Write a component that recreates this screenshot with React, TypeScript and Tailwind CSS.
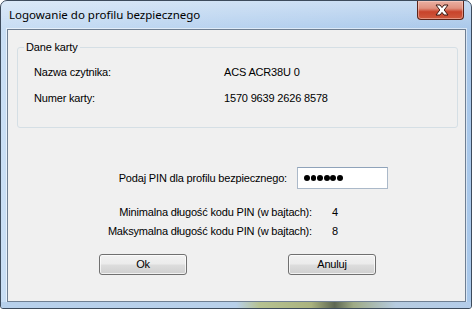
export default function App() {
  const base = { fontFamily: '"Liberation Sans", Arial, sans-serif' };
  return (
    <div className="w-[472px] h-[309px] bg-white">
      <div
        className="w-[472px] h-[309px] rounded-t-[7px] rounded-b-[3px] border border-[#3d4b5c] bg-[linear-gradient(to_right,#c9def4_0%,#bcd5f0_35%,#b3cfee_65%,#a9c8ea_100%)] flex flex-col overflow-hidden"
        style={base}
      >
        {/* title bar */}
        <div className="h-[28px] flex items-start shrink-0 bg-[linear-gradient(to_bottom,rgba(255,255,255,0.35),rgba(255,255,255,0))]">
          <div
            className="pl-[8px] pt-[6px] text-[11.5px] leading-[16px] text-black"
            style={{ fontFamily: '"Noto Sans", "Open Sans", sans-serif' }}
          >
            Logowanie do profilu bezpiecznego
          </div>
          <div className="ml-auto mr-[7px] w-[47px] h-[19px] rounded-b-[4px] border border-t-0 border-[#5c2419] bg-[linear-gradient(to_bottom,#eab0a2_0%,#e0917f_40%,#c8432b_60%,#cf5a3e_100%)] shadow-[inset_0_0_0_1px_rgba(255,220,210,0.45)] flex items-center justify-center">
            <svg width="14" height="12" viewBox="0 0 14 12" className="ml-[2px]">
              <polygon
                points="1,1 5,1 7,3.6 9,1 13,1 9.2,6 13,11 9,11 7,8.4 5,11 1,11 4.8,6"
                fill="#ffffff"
                stroke="#3b1710"
                strokeWidth="1"
                strokeLinejoin="round"
              />
            </svg>
          </div>
        </div>

        {/* client area */}
        <div className="ml-[6px] mr-[5px] h-[273px] shrink-0 border border-[#6f7f92] bg-[#f0f0f0] shadow-[0_0_0_1px_rgba(255,255,255,0.55)] flex flex-col text-[11px] leading-[13px] tracking-[-0.17px] text-black">
          {/* group box */}
          <div className="relative mt-[17px] ml-[9px] w-[441px] h-[81px] rounded-[3px] border border-[#d5dfe5] pl-[16px] pt-[18px] flex flex-col gap-[13px]">
            <span className="absolute left-[6px] top-[-7px] px-[2px] bg-[#f0f0f0]">Dane karty</span>
            <div className="flex">
              <span className="w-[190px]">Nazwa czytnika:</span>
              <span>ACS ACR38U 0</span>
            </div>
            <div className="flex">
              <span className="w-[190px]">Numer karty:</span>
              <span>1570 9639 2626 8578</span>
            </div>
          </div>

          {/* PIN row */}
          <div className="mt-[39px] flex items-center h-[22px]">
            <span className="w-[279px] text-right">Podaj PIN dla profilu bezpiecznego:</span>
            <div className="ml-[10px] w-[91px] h-[22px] bg-white border border-[#abb9c9] border-t-[#8fa3ba] flex items-center pl-[6px] gap-[0.8px]">
              {[0, 1, 2, 3, 4, 5].map((i) => (
                <span key={i} className="w-[5.8px] h-[5.8px] rounded-full bg-black" />
              ))}
            </div>
          </div>

          {/* min/max */}
          <div className="mt-[17px] flex">
            <span className="w-[304px] text-right">Minimalna długość kodu PIN (w bajtach):</span>
            <span className="ml-[20px]">4</span>
          </div>
          <div className="mt-[6px] flex">
            <span className="w-[304px] text-right">Maksymalna długość kodu PIN (w bajtach):</span>
            <span className="ml-[20px]">8</span>
          </div>

          {/* buttons */}
          <div className="mt-[16px] flex">
            <div className="ml-[91px] w-[88px] h-[21px] rounded-[3px] border border-[#707070] bg-[linear-gradient(to_bottom,#f2f2f2_0%,#ebebeb_48%,#dddddd_52%,#cfcfcf_100%)] shadow-[inset_0_0_0_1px_rgba(255,255,255,0.7)] flex items-center justify-center">
              Ok
            </div>
            <div className="ml-[101px] w-[88px] h-[21px] rounded-[3px] border border-[#707070] bg-[linear-gradient(to_bottom,#f2f2f2_0%,#ebebeb_48%,#dddddd_52%,#cfcfcf_100%)] shadow-[inset_0_0_0_1px_rgba(255,255,255,0.7)] flex items-center justify-center">
              Anuluj
            </div>
          </div>
        </div>

        {/* bottom frame */}
        <div className="h-[6px] shrink-0 bg-[linear-gradient(to_right,#b7d0eb_0%,#b8d0ea_50%,#b6c291_55%,#aab37f_66%,#5d6753_71%,#9fab86_75%,#b6cbe0_84%,#b4cdea_100%)]" />
      </div>
    </div>
  );
}
